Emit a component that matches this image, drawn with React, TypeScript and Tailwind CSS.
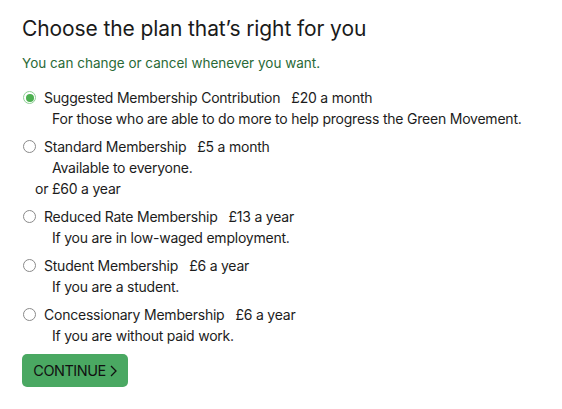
import React from "react";

const plans = [
  { name: "Suggested Membership Contribution", price: "£20 a month", desc: "For those who are able to do more to help progress the Green Movement.", checked: true },
  { name: "Standard Membership", price: "£5 a month", desc: "Available to everyone.", extra: "or £60 a year" },
  { name: "Reduced Rate Membership", price: "£13 a year", desc: "If you are in low-waged employment." },
  { name: "Student Membership", price: "£6 a year", desc: "If you are a student." },
  { name: "Concessionary Membership", price: "£6 a year", desc: "If you are without paid work." },
];

export default function App() {
  return (
    <div className="w-[562px] h-[409px] bg-white text-[#1c1c1c] pl-[22px] pt-[15px]" style={{ fontFamily: "Inter, 'Noto Sans', sans-serif" }}>
      <h1 className="text-[21px] leading-[28px] tracking-[-0.1px] text-[#1a1a1a]">Choose the plan that’s right for you</h1>
      <p className="mt-[12px] text-[13.5px] leading-[16px] text-[#2a6a37]">You can change or cancel whenever you want.</p>
      <div className="mt-[16px] flex flex-col gap-[7px] text-[14px] tracking-[-0.22px]">
        {plans.map((p) => (
          <div key={p.name} className="flex flex-col">
            <label className="flex items-center h-[21px]">
              {p.checked ? (
                <span className="w-[13px] h-[13px] rounded-full border border-[#8fcf96] flex items-center justify-center mr-[8px] ml-[1px]">
                  <span className="w-[8px] h-[8px] rounded-full bg-[#4cb050]" />
                </span>
              ) : (
                <span className="w-[13px] h-[13px] rounded-full border border-[#8a8a8a] mr-[8px] ml-[1px]" />
              )}
              <span>{p.name}</span>
              <span className="ml-[11px]">{p.price}</span>
            </label>
            <div className="pl-[30px] h-[21px] flex items-center">{p.desc}</div>
            {p.extra && <div className="pl-[13px] h-[21px] flex items-center">{p.extra}</div>}
          </div>
        ))}
      </div>
      <button className="mt-[8px] w-[106px] h-[33px] rounded-[5px] bg-[#4aa862] text-[#111] text-[14.5px] flex items-center justify-center gap-[4px] tracking-[-0.5px]">
        CONTINUE
        <svg width="7" height="12" viewBox="0 0 7 12" fill="none" stroke="#111" strokeWidth="1.3"><path d="M1 1l5 5-5 5" /></svg>
      </button>
    </div>
  );
}
